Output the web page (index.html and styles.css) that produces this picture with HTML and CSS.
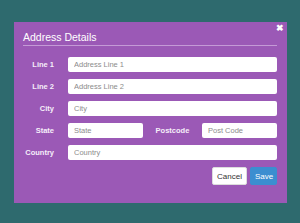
FILE: index.html
```html
<!DOCTYPE html>
<html lang="en">
<head>
    <meta charset="UTF-8">
    <title>Address Details</title>
    <link rel="stylesheet" href="styles.css">
</head>
<body>
<div class="modal">
    <span class="close">&#10006;</span>
    <h2 class="modal-title">Address Details</h2>
    <form class="address-form">
        <div class="form-row">
            <label for="line1">Line 1</label>
            <input type="text" id="line1" placeholder="Address Line 1">
        </div>
        <div class="form-row">
            <label for="line2">Line 2</label>
            <input type="text" id="line2" placeholder="Address Line 2">
        </div>
        <div class="form-row">
            <label for="city">City</label>
            <input type="text" id="city" placeholder="City">
        </div>
        <div class="form-row">
            <label for="state">State</label>
            <div class="split">
                <input type="text" id="state" placeholder="State">
                <label for="postcode" class="inline-label">Postcode</label>
                <input type="text" id="postcode" placeholder="Post Code">
            </div>
        </div>
        <div class="form-row">
            <label for="country">Country</label>
            <input type="text" id="country" placeholder="Country">
        </div>
        <div class="actions">
            <button type="button" class="btn btn-cancel">Cancel</button>
            <button type="submit" class="btn btn-save">Save</button>
        </div>
    </form>
</div>
</body>
</html>
```

FILE: styles.css
```css
body {
    margin: 0;
    background-color: #2e6a6e;
    font-family: "Liberation Sans", Arial, sans-serif;
}

.modal {
    position: relative;
    width: 273px;
    height: 181px;
    margin: 22px 0 0 14px;
    padding: 9px 10px 0 9px;
    box-sizing: border-box;
    background-color: #9b59b6;
}

.close {
    position: absolute;
    top: 1px;
    right: 3px;
    color: #fff;
    font-size: 8.5px;
    font-weight: bold;
}

.modal-title {
    margin: 0 0 11px 0;
    padding-bottom: 1px;
    border-bottom: 1px solid #c49ad6;
    color: #fff;
    font-size: 10.5px;
    font-weight: normal;
    line-height: 13px;
}

.form-row {
    display: grid;
    grid-template-columns: 45px 1fr;
    align-items: center;
    margin-bottom: 7px;
}

.form-row label {
    padding-right: 14px;
    text-align: right;
    color: #f6eefa;
    font-size: 7.5px;
    font-weight: bold;
}

.form-row input {
    width: 100%;
    height: 15px;
    box-sizing: border-box;
    padding: 0 6px;
    border: none;
    border-radius: 2px;
    background: #fff;
    font-family: inherit;
    font-size: 7.5px;
    color: #555;
}

.form-row input::placeholder {
    color: #8c8c8c;
}

.split {
    display: grid;
    grid-template-columns: 1fr 59px 1fr;
    align-items: center;
}

.split .inline-label {
    padding-right: 0;
    text-align: center;
}

.actions {
    display: flex;
    justify-content: flex-end;
    gap: 3px;
    margin-top: 6px;
}

.btn {
    height: 18px;
    padding: 0 4px;
    border-radius: 2px;
    font-family: inherit;
    font-size: 8px;
    cursor: pointer;
}

.btn-cancel {
    width: 35px;
    background: #fff;
    border: 1px solid #ddd;
    color: #333;
}

.btn-save {
    width: 27px;
    background: #3b8ed0;
    border: 1px solid #3b8ed0;
    color: #fff;
}
```
